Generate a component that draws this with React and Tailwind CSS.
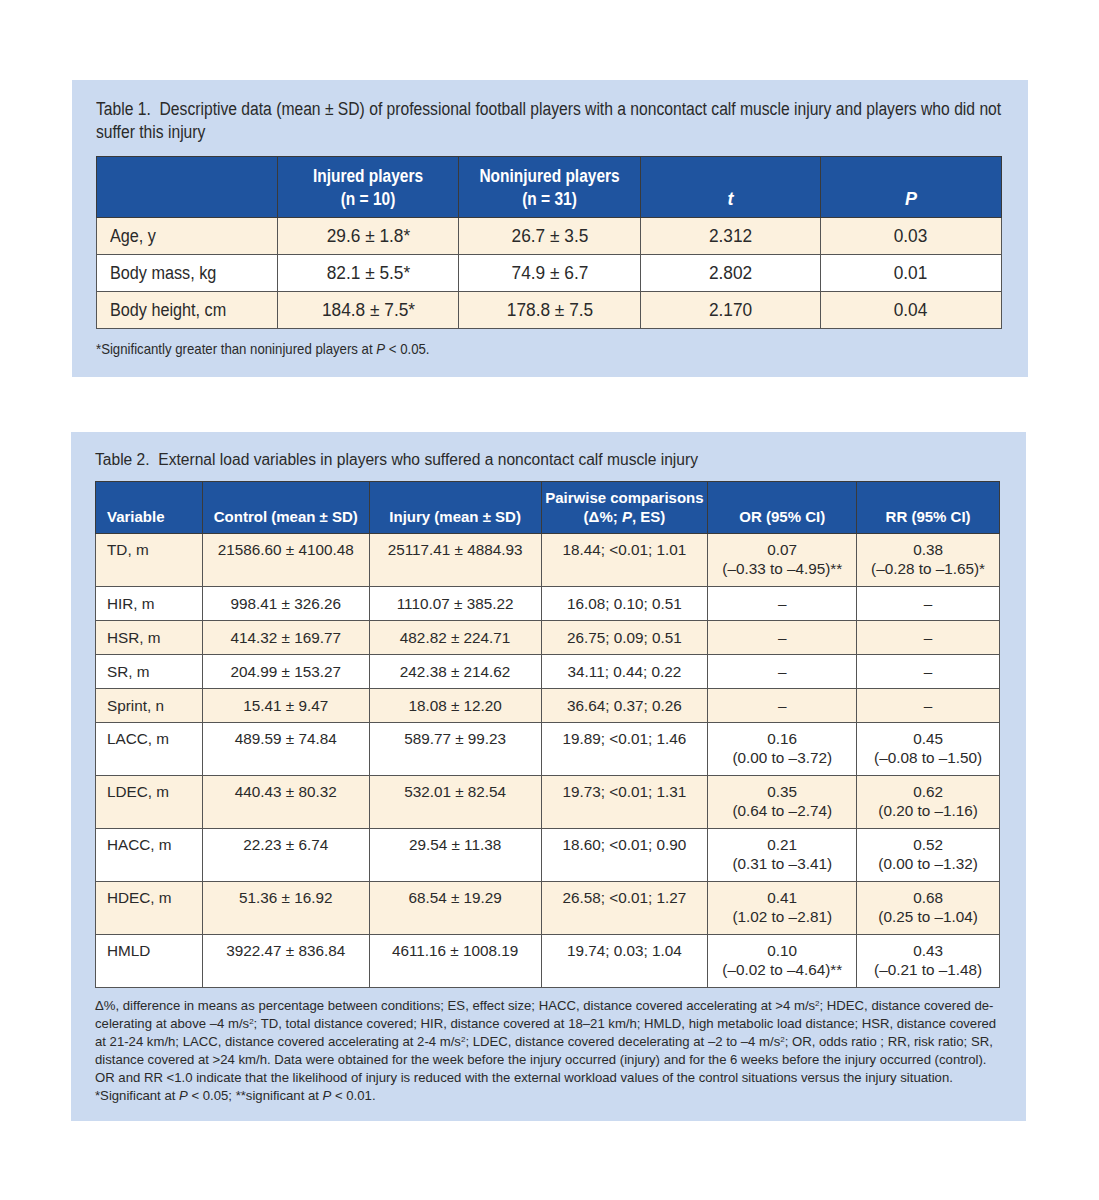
import React from "react";

const sans = { fontFamily: '"Liberation Sans", Arial, sans-serif' };

const t1Rows = [
  ["Age, y", "29.6 ± 1.8*", "26.7 ± 3.5", "2.312", "0.03"],
  ["Body mass, kg", "82.1 ± 5.5*", "74.9 ± 6.7", "2.802", "0.01"],
  ["Body height, cm", "184.8 ± 7.5*", "178.8 ± 7.5", "2.170", "0.04"],
];

const t2Rows = [
  ["TD, m", "21586.60 ± 4100.48", "25117.41 ± 4884.93", "18.44; <0.01; 1.01", ["0.07", "(–0.33 to –4.95)**"], ["0.38", "(–0.28 to –1.65)*"]],
  ["HIR, m", "998.41 ± 326.26", "1110.07 ± 385.22", "16.08; 0.10; 0.51", null, null],
  ["HSR, m", "414.32 ± 169.77", "482.82 ± 224.71", "26.75; 0.09; 0.51", null, null],
  ["SR, m", "204.99 ± 153.27", "242.38 ± 214.62", "34.11; 0.44; 0.22", null, null],
  ["Sprint, n", "15.41 ± 9.47", "18.08 ± 12.20", "36.64; 0.37; 0.26", null, null],
  ["LACC, m", "489.59 ± 74.84", "589.77 ± 99.23", "19.89; <0.01; 1.46", ["0.16", "(0.00 to –3.72)"], ["0.45", "(–0.08 to –1.50)"]],
  ["LDEC, m", "440.43 ± 80.32", "532.01 ± 82.54", "19.73; <0.01; 1.31", ["0.35", "(0.64 to –2.74)"], ["0.62", "(0.20 to –1.16)"]],
  ["HACC, m", "22.23 ± 6.74", "29.54 ± 11.38", "18.60; <0.01; 0.90", ["0.21", "(0.31 to –3.41)"], ["0.52", "(0.00 to –1.32)"]],
  ["HDEC, m", "51.36 ± 16.92", "68.54 ± 19.29", "26.58; <0.01; 1.27", ["0.41", "(1.02 to –2.81)"], ["0.68", "(0.25 to –1.04)"]],
  ["HMLD", "3922.47 ± 836.84", "4611.16 ± 1008.19", "19.74; 0.03; 1.04", ["0.10", "(–0.02 to –4.64)**"], ["0.43", "(–0.21 to –1.48)"]],
];

function Cell2({ v }) {
  if (!v) return <span>–</span>;
  return (
    <>
      <div>{v[0]}</div>
      <div>{v[1]}</div>
    </>
  );
}

function N({ children }) {
  return <span className="inline-block whitespace-nowrap scale-x-[0.96]">{children}</span>;
}
function NL({ children }) {
  return <span className="inline-block whitespace-nowrap scale-x-[0.9] origin-left">{children}</span>;
}

export default function App() {
  return (
    <div className="w-[1099px] h-[1200px] bg-white pt-[80px]" style={sans}>
      {/* Panel 1 */}
      <div className="ml-[72px] w-[956px] h-[297px] bg-[#cbdaf0] pl-[24px] pt-[18px]">
        <div className="text-[18px] leading-[23px] text-[#2a2a2a] whitespace-nowrap scale-x-[0.87] origin-left">
          <div>Table 1.&nbsp; Descriptive data (mean ± SD) of professional football players with a noncontact calf muscle injury and players who did not</div>
          <div>suffer this injury</div>
        </div>
        <table className="mt-[12px] border-collapse border-[1.5px] border-[#4a4a4a] text-[#2a2a2a]" style={{ width: 906 }}>
          <colgroup>
            <col className="w-[181px]" />
            <col className="w-[181px]" />
            <col className="w-[182px]" />
            <col className="w-[180px]" />
            <col className="w-[181px]" />
          </colgroup>
          <thead>
            <tr className="h-[61px] bg-[#1f549f] text-white text-[18px] leading-[23px] font-bold">
              <th className="border border-[#3a3a3a]"></th>
              <th className="border border-[#3a3a3a] align-bottom pb-[6px] font-bold">
                <span className="inline-block scale-x-[0.86]">Injured players<br />(n = 10)</span>
              </th>
              <th className="border border-[#3a3a3a] align-bottom pb-[6px] font-bold">
                <span className="inline-block scale-x-[0.86] whitespace-nowrap">Noninjured players<br />(n = 31)</span>
              </th>
              <th className="border border-[#3a3a3a] align-bottom pb-[6px] italic font-bold">t</th>
              <th className="border border-[#3a3a3a] align-bottom pb-[6px] italic font-bold">P</th>
            </tr>
          </thead>
          <tbody>
            {t1Rows.map((r, i) => (
              <tr key={i} className={`h-[37px] text-[18px] ${i % 2 === 0 ? "bg-[#fcf1de]" : "bg-white"}`}>
                <td className="border border-[#555] pl-[13px] text-left"><NL>{r[0]}</NL></td>
                <td className="border border-[#555] text-center"><N>{r[1]}</N></td>
                <td className="border border-[#555] text-center"><N>{r[2]}</N></td>
                <td className="border border-[#555] text-center"><N>{r[3]}</N></td>
                <td className="border border-[#555] text-center"><N>{r[4]}</N></td>
              </tr>
            ))}
          </tbody>
        </table>
        <p className="mt-[9px] text-[15px] text-[#2a2a2a] whitespace-nowrap scale-x-[0.88] origin-left">
          *Significantly greater than noninjured players at <i>P</i> &lt; 0.05.
        </p>
      </div>

      {/* Panel 2 */}
      <div className="mt-[55px] ml-[71px] w-[955px] h-[689px] bg-[#cbdaf0] pl-[24px] pt-[18px]">
        <p className="text-[15.6px] leading-[20px] text-[#2a2a2a]">
          Table 2.&nbsp; External load variables in players who suffered a noncontact calf muscle injury
        </p>
        <table className="mt-[11px] border-collapse border-[1.5px] border-[#4a4a4a] text-[#2a2a2a] text-[15.3px] leading-[19px]" style={{ width: 905 }}>
          <colgroup>
            <col className="w-[107px]" />
            <col className="w-[167px]" />
            <col className="w-[172px]" />
            <col className="w-[167px]" />
            <col className="w-[149px]" />
            <col className="w-[143px]" />
          </colgroup>
          <thead>
            <tr className="h-[52px] bg-[#1f549f] text-white font-bold text-[15px]">
              <th className="border border-[#3a3a3a] align-bottom pb-[7px] text-left pl-[11px] font-bold">Variable</th>
              <th className="border border-[#3a3a3a] align-bottom pb-[7px] font-bold">Control (mean ± SD)</th>
              <th className="border border-[#3a3a3a] align-bottom pb-[7px] font-bold">Injury (mean ± SD)</th>
              <th className="border border-[#3a3a3a] align-bottom pb-[7px] font-bold">
                Pairwise comparisons<br />(Δ%; <i>P</i>, ES)
              </th>
              <th className="border border-[#3a3a3a] align-bottom pb-[7px] font-bold">OR (95% CI)</th>
              <th className="border border-[#3a3a3a] align-bottom pb-[7px] font-bold">RR (95% CI)</th>
            </tr>
          </thead>
          <tbody>
            {t2Rows.map((r, i) => {
              const tall = r[4] !== null;
              const al = tall ? "align-top pt-[6px]" : "align-middle";
              return (
                <tr key={i} className={`${tall ? "h-[53px]" : "h-[34px]"} ${i % 2 === 0 ? "bg-[#fcf1de]" : "bg-white"}`}>
                  <td className={`border border-[#555] pl-[11px] text-left ${al}`}>{r[0]}</td>
                  <td className={`border border-[#555] text-center ${al}`}>{r[1]}</td>
                  <td className={`border border-[#555] text-center ${al}`}>{r[2]}</td>
                  <td className={`border border-[#555] text-center ${al}`}>{r[3]}</td>
                  <td className={`border border-[#555] text-center ${al}`}>
                    <Cell2 v={r[4]} />
                  </td>
                  <td className={`border border-[#555] text-center ${al}`}>
                    <Cell2 v={r[5]} />
                  </td>
                </tr>
              );
            })}
          </tbody>
        </table>
        <p className="mt-[9px] text-[13.15px] leading-[18px] text-[#2a2a2a] whitespace-nowrap">
          Δ%, difference in means as percentage between conditions; ES, effect size; HACC, distance covered accelerating at &gt;4 m/s<sup className="text-[8px]">2</sup>; HDEC, distance covered de-
          <br />
          celerating at above –4 m/s<sup className="text-[8px]">2</sup>; TD, total distance covered; HIR, distance covered at 18–21 km/h; HMLD, high metabolic load distance; HSR, distance covered
          <br />
          at 21-24 km/h; LACC, distance covered accelerating at 2-4 m/s<sup className="text-[8px]">2</sup>; LDEC, distance covered decelerating at –2 to –4 m/s<sup className="text-[8px]">2</sup>; OR, odds ratio ; RR, risk ratio; SR,
          <br />
          distance covered at &gt;24 km/h. Data were obtained for the week before the injury occurred (injury) and for the 6 weeks before the injury occurred (control).
          <br />
          OR and RR &lt;1.0 indicate that the likelihood of injury is reduced with the external workload values of the control situations versus the injury situation.
          <br />
          *Significant at <i>P</i> &lt; 0.05; **significant at <i>P</i> &lt; 0.01.
        </p>
      </div>
    </div>
  );
}
